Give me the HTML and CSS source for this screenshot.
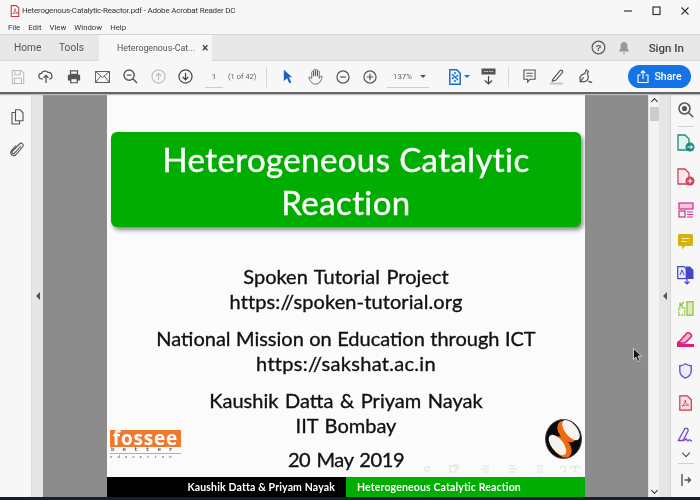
FILE: index.html
```html
<!DOCTYPE html>
<html lang="en">
<head>
<meta charset="utf-8">
<title>Heterogenous-Catalytic-Reactor.pdf - Adobe Acrobat Reader DC</title>
<link rel="stylesheet" href="styles.css">
</head>
<body>
<div class="app">
  <header class="titlebar">
    <svg class="pdf-mini" width="10" height="12" viewBox="0 0 12 14"><path d="M1.500 .5h6l3 3v10h-9z" fill="#fff" stroke="#c8383c" stroke-width="1.300"/><path d="M3 10c2-1 3-3 3-6 0 3 1 5 3.500 5.500-2 0-4 0-6.500 .5z" fill="none" stroke="#c8383c" stroke-width=".9"/></svg>
    <span class="title-text">Heterogenous-Catalytic-Reactor.pdf - Adobe Acrobat Reader DC</span>
    <div class="winctl">
      <svg width="10" height="10" viewBox="0 0 10 10"><path d="M1 5h8" stroke="#333" stroke-width="1.200"/></svg>
      <svg width="10" height="10" viewBox="0 0 10 10"><rect x="1" y="1" width="7" height="7.500" fill="none" stroke="#333" stroke-width="1.200"/></svg>
      <svg width="10" height="10" viewBox="0 0 10 10"><path d="M1.500 1.500l7 7M8.500 1.500l-7 7" stroke="#333" stroke-width="1.100"/></svg>
    </div>
  </header>
  <nav class="menubar"><span>File</span><span>Edit</span><span>View</span><span>Window</span><span>Help</span></nav>
  <div class="tabs">
    <span class="tab-link tab-home">Home</span>
    <span class="tab-link tab-tools">Tools</span>
    <div class="tab-doc"><span>Heterogenous-Cat...</span><span class="tab-x">×</span></div>
    <div class="tabs-right">
      <svg width="15" height="15" viewBox="0 0 16 16"><circle cx="8" cy="8" r="6.800" fill="none" stroke="#555" stroke-width="1.300"/><text x="8" y="11.800" font-size="10.500" font-family="Liberation Sans" font-weight="700" text-anchor="middle" fill="#555">?</text></svg>
      <svg class="bell" width="12" height="14" viewBox="0 0 14 16"><path d="M7 1c3 0 4 2.500 4 5s.5 4 2 6H1c1.500-2 2-3.500 2-6s1-5 4-5z" fill="#9a9a9a"/><path d="M5.500 13.500h3L7 15.500z" fill="#9a9a9a"/></svg>
      <span class="signin">Sign In</span>
    </div>
  </div>
  <div class="toolbar">
    <span class="slot"><svg width="14" height="16" viewBox="0 0 16 18" fill="none" stroke="#bdbdbd" stroke-width="1.200"><path d="M1.500 1.500h10l3 3v12h-13z"/><path d="M4.500 1.500v5h6v-5M4 16.500v-6h8v6"/></svg></span>
    <span class="slot"><svg width="16" height="15" viewBox="0 0 20 18" fill="none" stroke="#555" stroke-width="1.600"><path d="M6 12H4.500a3.500 3.500 0 0 1 0-7c1-3 6-4 8-1 3-.5 5 1.500 4.500 4 1.500 2-.5 4-2.500 4H14"/><path d="M10 17V8M7 10.500L10 7.500l3 3"/></svg></span>
    <span class="slot"><svg width="14" height="14" viewBox="0 0 16 16"><path d="M4 1h8v4H4z" fill="none" stroke="#555" stroke-width="1.400"/><path d="M1 5.500h14V12h-2.500v3h-9v-3H1z" fill="#555"/><rect x="5" y="10.500" width="6" height="3.500" fill="#f7f7f7"/></svg></span>
    <span class="slot"><svg width="15" height="12" viewBox="0 0 16 13" fill="none" stroke="#555" stroke-width="1"><rect x=".5" y=".5" width="15" height="12"/><path d="M.5 .5L8 7l7.500-6.500M.5 12.500L6 5.500M15.500 12.500L10 5.500"/></svg></span>
    <span class="slot"><svg width="15" height="15" viewBox="0 0 16 16" fill="none" stroke="#555" stroke-width="1.500"><circle cx="6.500" cy="6.500" r="5.500"/><path d="M4 6.500h5M10.500 10.500L15 15"/></svg></span>
    <span class="slot"><svg width="15" height="15" viewBox="0 0 16 16" fill="none" stroke="#b9b9b9" stroke-width="1.200"><circle cx="8" cy="8" r="7"/><path d="M8 12V4.500M5 7.500l3-3 3 3"/></svg></span>
    <span class="slot slot-down"><svg width="15" height="15" viewBox="0 0 16 16" fill="none" stroke="#444" stroke-width="1.300"><circle cx="8" cy="8" r="7"/><path d="M8 4v7.500M5 8.500l3 3 3-3"/></svg></span>
    <span class="page-input">1</span>
    <span class="page-count">(1 of 42)</span>
    <span class="tsep"></span>
    <span class="slot"><svg width="10" height="15" viewBox="0 0 12 16"><path d="M1 0l10 9H7l3 6-2.500 1L5 10l-4 3.500z" fill="#1f5fc0"/></svg></span>
    <span class="slot slot-tight"><svg width="15" height="17" viewBox="0 0 16 18" fill="none" stroke="#555" stroke-width=".9"><path d="M4 11V4.500a1 1 0 0 1 2 0V9M6 8V2.500a1 1 0 0 1 2 0V8.500M8 8V2.500a1 1 0 0 1 2 0V9M10 8.500V4a1 1 0 0 1 2 0v7c1-2.500 3-3 3-2 0 2-2 8-6 8H7c-3 0-5-4-6-6.500-.5-1 1-1.500 3 .5"/></svg></span>
    <span class="slot slot-tight"><svg width="14" height="14" viewBox="0 0 15 15" fill="none" stroke="#555" stroke-width="1.300"><circle cx="7.500" cy="7.500" r="6.500"/><path d="M4.500 7.500h6"/></svg></span>
    <span class="slot"><svg width="14" height="14" viewBox="0 0 15 15" fill="none" stroke="#555" stroke-width="1.300"><circle cx="7.500" cy="7.500" r="6.500"/><path d="M4 7.500h7M7.500 4v7"/></svg></span>
    <span class="zoom-input"><span>137%</span><i class="caret"></i></span>
    <span class="fit"><svg width="12" height="16" viewBox="0 0 12 16"><path d="M.8.8h7l3.400 3.400v11H.8z" fill="#eaf2fb" stroke="#1a6fd0" stroke-width="1.500"/><path d="M3 5l2.500 2.500L3 10M9 6L6.500 8.500 9 11M5 12h2M5 4h2" stroke="#1a6fd0" stroke-width="1.300" fill="none"/></svg><i class="caret caret-blue"></i></span>
    <span class="slot slot-scan"><svg width="15" height="17" viewBox="0 0 15 17" fill="none"><rect x=".5" y=".5" width="14" height="6" fill="#555"/><path d="M3 3.500h9" stroke="#ddd" stroke-dasharray="1.500 1"/><path d="M7.500 8v8M4 12.500l3.500 3.500 3.500-3.500" stroke="#444" stroke-width="1.200"/></svg></span>
    <span class="tsep tsep-2"></span>
    <span class="slot"><svg width="13" height="15" viewBox="0 0 14 16" fill="none" stroke="#555" stroke-width="1.200"><path d="M1 1h12v10H7.500l-2.500 3v-3H1z"/><path d="M3.500 4.500h7M3.500 7.500h7"/></svg></span>
    <span class="slot"><svg width="15" height="16" viewBox="0 0 16 17" fill="none"><path d="M3 11L11 1.500c1-1 3 .5 2.500 2L6 12l-3.500 1z" stroke="#555" stroke-width="1.300"/><rect x="0" y="14.500" width="14" height="2" fill="#c4c4c4"/></svg></span>
    <span class="slot"><svg width="15" height="15" viewBox="0 0 16 16" fill="none" stroke="#555" stroke-width="1.300"><path d="M9 1l2 1.500-1 2.500 1 3c0 3-2 5-4 5.500H2.500L2 9c1-2.500 3-3.500 5-4z"/><path d="M2 14L6 9M11 14c1-1.500 1.500-1 2 0s1.500 0 2-.5"/></svg></span>
    <button class="share"><svg width="12" height="13" viewBox="0 0 12 13" fill="none" stroke="#fff" stroke-width="1.100"><path d="M3.500 5H1v7.500h10V5H8.500M6 9V1M3.800 3L6 .8 8.200 3"/></svg><span>Share</span></button>
  </div>
  <main class="main">
    <aside class="leftrail">
      <svg width="13" height="16" viewBox="0 0 13 16" fill="none" stroke="#555" stroke-width="1.100"><path d="M4.500 .8h4.500l3 3v8h-7.500z"/><path d="M4.500 3.500H1v11.500h7.500v-3"/></svg>
      <svg width="14" height="15" viewBox="0 0 14 15" fill="none" stroke="#555" stroke-width="1.100"><path d="M11 4L4.500 11c-1.500 1.500-3.500-.5-2-2L9.500 2c2-2 5 .5 3 3L6 12.500c-3 3-7-1-4.500-4L6 3.500"/></svg>
    </aside>
    <div class="strip"><i class="tri-left"></i></div>
    <section class="viewer">
      <article class="slide">
        <div class="slide-body">
          <h1 class="banner">Heterogeneous Catalytic<br>Reaction</h1>
          <p class="line l-spoken">Spoken Tutorial Project</p>
          <p class="line l-url1">https://spoken-tutorial.org</p>
          <p class="line l-nat">National Mission on Education through ICT</p>
          <p class="line l-url2">https://sakshat.ac.in</p>
          <p class="line l-auth">Kaushik Datta &amp; Priyam Nayak</p>
          <p class="line l-iit">IIT Bombay</p>
          <p class="line l-date">20 May 2019</p>
          <div class="fossee"><div class="fossee-box">fossee</div><div class="fossee-b">better</div><div class="fossee-e">education</div></div>
          <svg class="spoken-logo" width="37" height="40" viewBox="0 0 37 40"><ellipse cx="18.500" cy="20" rx="18" ry="19.500" fill="#0a0a0a"/><ellipse cx="22" cy="12.500" rx="8" ry="12" transform="rotate(-38 22 12.500)" fill="#f26a0f"/><ellipse cx="17" cy="28" rx="8" ry="12" transform="rotate(-38 17 28)" fill="#f26a0f"/><ellipse cx="26" cy="11" rx="6" ry="12" transform="rotate(-38 26 11)" fill="#f6f3ee"/><ellipse cx="12.500" cy="26" rx="6" ry="12" transform="rotate(-38 12.500 26)" fill="#f6f3ee"/><ellipse cx="18.500" cy="20" rx="18" ry="19.500" fill="none" stroke="#444" stroke-width=".9"/></svg>
          <svg class="nav-icons" width="165" height="10" viewBox="0 0 165 10" fill="none" stroke="#d8e6d8" stroke-width="1"><rect x="8" y="3" width="4" height="4"/><rect x="33" y="2" width="6" height="6"/><path d="M36 1h5v5M64 5h8M66 2h6M66 8h6M92 2h6M92 5h8M92 8h6M120 2h6M120 5h6M120 8h6M143 5a3 3 0 1 1 3 3M153 5a3 3 0 1 1 6 0M163 5a3 3 0 1 0-3 3"/></svg>
        </div>
        <footer class="slide-foot"><span class="foot-black">Kaushik Datta &amp; Priyam Nayak</span><span class="foot-green">Heterogeneous Catalytic Reaction</span></footer>
      </article>
      <svg class="pointer" width="9" height="14" viewBox="0 0 9 14"><path d="M.5.500v11l2.500-2.500 2 4.500 2-1-2-4.500h3.500z" fill="#111" stroke="#fff" stroke-width=".7"/></svg>
    </section>
    <div class="scrollbar"><i class="chev chev-up"></i><i class="thumb"></i><i class="chev chev-down"></i></div>
    <div class="strip strip-r"><i class="tri-left"></i></div>
    <aside class="rightrail">
      <svg class="r-zoom" width="16" height="16" viewBox="0 0 16 16" fill="none" stroke="#555" stroke-width="1.500"><circle cx="6.500" cy="6.500" r="5.500"/><circle cx="6.500" cy="6.500" r="1.800" fill="#555"/><path d="M10.500 10.500L15 15"/></svg>
      <i class="rsep"></i>
      <svg width="18" height="18" viewBox="0 0 18 18" fill="none"><path d="M1 1h7l4 4v11H1z" stroke="#1d8a84" stroke-width="1.300" fill="#e3f2f1"/><circle cx="13" cy="13" r="4.500" fill="#1d8a84"/><path d="M10.500 13h5M13.500 11l2 2-2 2" stroke="#fff"/></svg>
      <svg width="18" height="18" viewBox="0 0 18 18" fill="none"><path d="M1 1h7l4 4v11H1z" stroke="#d2405a" stroke-width="1.300" fill="#fae8ea"/><circle cx="13" cy="13" r="4.500" fill="#d2405a"/><path d="M10.500 13h5M13 10.500v5" stroke="#fff"/></svg>
      <svg width="16" height="16" viewBox="0 0 16 16" fill="none" stroke="#cf2e88" stroke-width="1.200"><rect x="1" y="1" width="14" height="6" fill="#f5c6de"/><rect x="1" y="9" width="6" height="6"/><path d="M9 10h6M9 12.500h6M9 15h6"/></svg>
      <svg width="15" height="16" viewBox="0 0 15 16"><path d="M0 1.500C0 .7.700 0 1.500 0h12c.8 0 1.500.7 1.500 1.500v9c0 .8-.7 1.500-1.500 1.500H7l-3 3.500V12H1.500C.7 12 0 11.300 0 10.500z" fill="#d9b10c"/><path d="M3.500 4.500h8M3.500 7.500h5" stroke="#fbf2c8" stroke-width="1.200"/></svg>
      <svg width="17" height="19" viewBox="0 0 17 19"><path d="M.7.700h6.500l2 2v10H.7z" fill="#e8e8fb" stroke="#4646c8" stroke-width="1.200"/><path d="M9 .5h4l3.500 3.500v9H9z" fill="#4646c8"/><path d="M3 9l2-5 2 5" stroke="#4646c8" fill="none"/><path d="M10 13v5M7.500 15.500l2.500 2.500 2.500-2.500" stroke="#4646c8" stroke-width="1.200" fill="none"/></svg>
      <svg width="16" height="15" viewBox="0 0 16 15" fill="none" stroke="#8bc53f" stroke-width="1.300"><rect x="9" y=".7" width="6" height="13.500" fill="#d8edb8"/><rect x=".7" y="6.500" width="6" height="7.500" stroke-dasharray="2 1"/><path d="M6 1L2 4.500M2 1.500v3h3"/></svg>
      <svg width="17" height="15" viewBox="0 0 17 15"><path d="M2 10L10 1c1-1 2.500 0 3.500 1s1.500 2 .5 3l-6 6H3z" fill="#f3b6d2" stroke="#d8207c" stroke-width="1.500"/><path d="M0 14v-4l2-1 4 4-1 1z" fill="#d8207c"/><rect x="0" y="12" width="17" height="3" fill="#d8207c"/></svg>
      <svg width="13" height="16" viewBox="0 0 13 16"><path d="M6.500 .8c2 1.500 4 2 5.700 2V8c0 3.500-3 6-5.700 7.200C3.800 14 .8 11.500.8 8V2.800c1.700 0 3.700-.5 5.700-2z" fill="#ebebfa" stroke="#5a5ad0" stroke-width="1.400"/></svg>
      <svg width="13" height="16" viewBox="0 0 13 16"><path d="M.8.800h7.500l4 4v10.400H.8z" fill="#f9dfe3" stroke="#c8384c" stroke-width="1.200"/><path d="M3 11c2-1 3-3 3.300-6 .2 3 1.200 4.500 3.500 5.200-2.500 0-4.500 0-6.800.8z" fill="none" stroke="#c8384c" stroke-width=".8"/></svg>
      <svg width="17" height="16" viewBox="0 0 17 16" fill="none" stroke="#7a45c8" stroke-width="1.300"><path d="M1 14L8 1.500c1.500-1 3.500.5 3 2.500L6 13.500H1.500z"/><path d="M7 14c1.500-2.500 2.500-2.500 3-1s1.500 1 2 0 1.500 1 3 1" /></svg>
      <i class="rchev"></i>
      <i class="rsep rsep-2"></i>
      <svg class="r-collapse" width="10" height="12" viewBox="0 0 10 12" fill="none" stroke="#555" stroke-width="1.400"><path d="M1 0v12M3.500 6h6M7 3.500L9.500 6 7 8.500"/></svg>
    </aside>
  </main>
  <div class="taskbar"></div>
</div>
</body>
</html>
```
FILE: styles.css
```css
* { box-sizing: border-box; }
html, body { margin: 0; padding: 0; }
body { font-family: "Roboto", "Liberation Sans", sans-serif; background: #f7f7f7; }
.app { width: 700px; height: 500px; display: flex; flex-direction: column; overflow: hidden; background: #f7f7f7; filter: blur(.35px); }

.titlebar { height: 20px; flex: none; display: flex; align-items: center; padding: 1px 0 0 10px; font-size: 8px; letter-spacing: -.2px; color: #333; }
.pdf-mini { margin-right: 2px; }
.title-text { white-space: nowrap; }
.winctl { margin-left: auto; width: 87px; display: flex; gap: 18.500px; padding-right: 10px; justify-content: flex-end; }

.menubar { height: 14px; flex: none; display: flex; align-items: center; gap: 8px; padding: 0 0 0 8px; font-size: 7.800px; color: #333; }

.tabs { height: 27px; flex: none; display: flex; align-items: center; background: #e8e8e8; border-top: 1px solid #d4d4d4; border-bottom: 1px solid #d8d8d8; color: #555; position: relative; }
.tab-link { white-space: nowrap; font-size: 10.200px; }
.tab-home { margin-left: 14px; width: 45px; }
.tab-tools { width: 40px; }
.tab-doc { width: 113px; height: 26px; margin-bottom: -1px; background: #f7f7f7; display: flex; align-items: center; padding-left: 18px; font-size: 8.800px; gap: 7px; white-space: nowrap; }
.tab-x { font-size: 12px; font-weight: 700; color: #444; line-height: 1; }
.tabs-right { margin-left: auto; display: flex; align-items: center; padding-right: 16px; }
.bell { margin-left: 12px; }
.signin { margin-left: 19px; font-size: 11.500px; font-weight: 500; color: #444; }

.toolbar { height: 33px; flex: none; display: flex; align-items: center; padding-left: 4px; background: #f7f7f7; border-bottom: 2px solid #666; box-shadow: 0 1px 1px #bbb; position: relative; z-index: 1; }
.slot { width: 28px; height: 20px; display: flex; align-items: center; justify-content: center; flex: none; }
.slot-down { width: 26px; }
.slot-tight { width: 27px; }
.page-input { width: 18px; margin-left: 7px; height: 22px; line-height: 22px; text-align: center; font-size: 8px; color: #555; border-bottom: 1px solid #ccc; }
.page-count { margin-left: 5px; font-size: 7.500px; color: #666; white-space: nowrap; width: 29px; }
.tsep { width: 1px; height: 20px; background: #d8d8d8; margin: 0 7px 0 9px; flex: none; }
.zoom-input { width: 42px; height: 22px; margin-left: 3px; display: flex; align-items: center; justify-content: space-between; font-size: 7.800px; color: #666; border-bottom: 1px solid #ccc; padding: 0 3px 0 6px; flex: none; }
.caret { width: 0; height: 0; border-left: 3px solid transparent; border-right: 3px solid transparent; border-top: 3px solid #555; display: block; }
.caret-blue { border-top-color: #1a6fd0; margin-left: 3px; }
.fit { display: flex; align-items: center; margin-left: 20px; flex: none; }
.slot-scan { margin-left: 4px; }
.tsep-2 { margin: 0 6px 0 6px; }
.share { margin-left: 29px; width: 63px; height: 23px; border: 0; border-radius: 12px; background: #1473e6; color: #fff; font: 500 10.500px "Roboto", sans-serif; display: flex; align-items: center; justify-content: center; gap: 5px; padding: 0; }

.main { flex: 1; min-height: 0; display: flex; }
.leftrail { width: 32px; flex: none; display: flex; flex-direction: column; align-items: center; gap: 17px; padding: 15px 0 0 3px; background: #f7f7f7; border-right: 1px solid #dcdcdc; }
.strip { width: 11px; flex: none; background: #e6e6e6; display: flex; align-items: center; justify-content: center; }
.strip-r { width: 12px; border-right: 1px solid #d6d6d6; }
.tri-left { width: 0; height: 0; border-top: 4px solid transparent; border-bottom: 4px solid transparent; border-right: 4px solid #555; display: block; }
.viewer { flex: 1; min-width: 0; background: #8c8c8c; display: flex; justify-content: center; position: relative; }
.slide { width: 478px; height: 100%; background: #fbfbfb; display: flex; flex-direction: column; margin-left: 1px; }
.slide-body { flex: 1; min-height: 0; position: relative; display: flex; flex-direction: column; align-items: center; padding: 38px 4px 0; }
.banner { margin: 0; width: 470px; height: 95px; background: #00ad00; border-radius: 6px; box-shadow: 2px 3px 4px #8a8a8a; color: #fff; text-align: center; font: 400 33px/43px "Lato", sans-serif; letter-spacing: .4px; padding-top: 6px; -webkit-text-stroke: .4px #fff; }
.line { margin: 0; font: 400 20px/25px "Lato", sans-serif; color: #111; white-space: nowrap; word-spacing: 1.500px; -webkit-text-stroke: .35px #111; }
.l-spoken { margin-top: 37px; }
.l-url1 { letter-spacing: .1px; }
.l-nat { margin-top: 12px; word-spacing: .3px; }
.l-url2 { letter-spacing: .3px; }
.l-auth { margin-top: 12px; }
.l-date { margin-top: 9px; letter-spacing: -.4px; }
.fossee { position: absolute; left: 3px; bottom: 17px; width: 71px; }
.fossee-box { height: 17px; background: #ee7a30; color: #fff; font: 700 19px/17px "Open Sans", sans-serif; letter-spacing: .8px; text-align: center; }
.fossee-b { font: 700 6px/6px "Liberation Mono", monospace; letter-spacing: 8px; color: #555; border-bottom: 1px solid #ee9a70; padding-left: 1px; white-space: nowrap; }
.fossee-e { font: 700 4px/6px "Liberation Mono", monospace; letter-spacing: 5px; color: #777; white-space: nowrap; }
.spoken-logo { position: absolute; right: 3px; bottom: 18px; }
.nav-icons { position: absolute; right: 3px; bottom: 3px; }
.slide-foot { height: 20px; flex: none; display: flex; font: 700 10.500px/20px "Lato", sans-serif; color: #fff; letter-spacing: .15px; }
.foot-black { width: 239px; background: #000; text-align: right; padding-right: 11px; }
.foot-green { flex: 1; background: #00ad00; padding-left: 11px; white-space: nowrap; }
.pointer { position: absolute; left: 590px; top: 254px; }

.scrollbar { width: 11px; flex: none; background: #f3f3f3; display: flex; flex-direction: column; align-items: center; padding-top: 3px; border-left: 1px solid #e4e4e4; }
.chev { width: 5px; height: 5px; border-left: 1.500px solid #333; border-top: 1.500px solid #333; display: block; }
.chev-up { transform: rotate(45deg); margin-top: 2px; }
.thumb { width: 9px; height: 14px; background: #cdcdcd; display: block; margin-top: 3px; }
.chev-down { transform: rotate(225deg); margin-top: auto; margin-bottom: 4px; }

.rightrail { width: 29px; flex: none; background: #f7f7f7; display: flex; flex-direction: column; align-items: center; padding-top: 8px; gap: 16px; }
.r-zoom { margin-bottom: -8px; }
.rsep { width: 16px; height: 1px; background: #d0d0d0; display: block; margin-bottom: -9px; }
.rchev { width: 6px; height: 6px; border-right: 1.300px solid #444; border-bottom: 1.300px solid #444; transform: rotate(45deg); display: block; margin-top: -9px; }
.rsep-2 { margin: -9px 0 0; }
.r-collapse { margin-top: -6px; }
.taskbar { height: 3px; flex: none; background: #14202c; }
```
